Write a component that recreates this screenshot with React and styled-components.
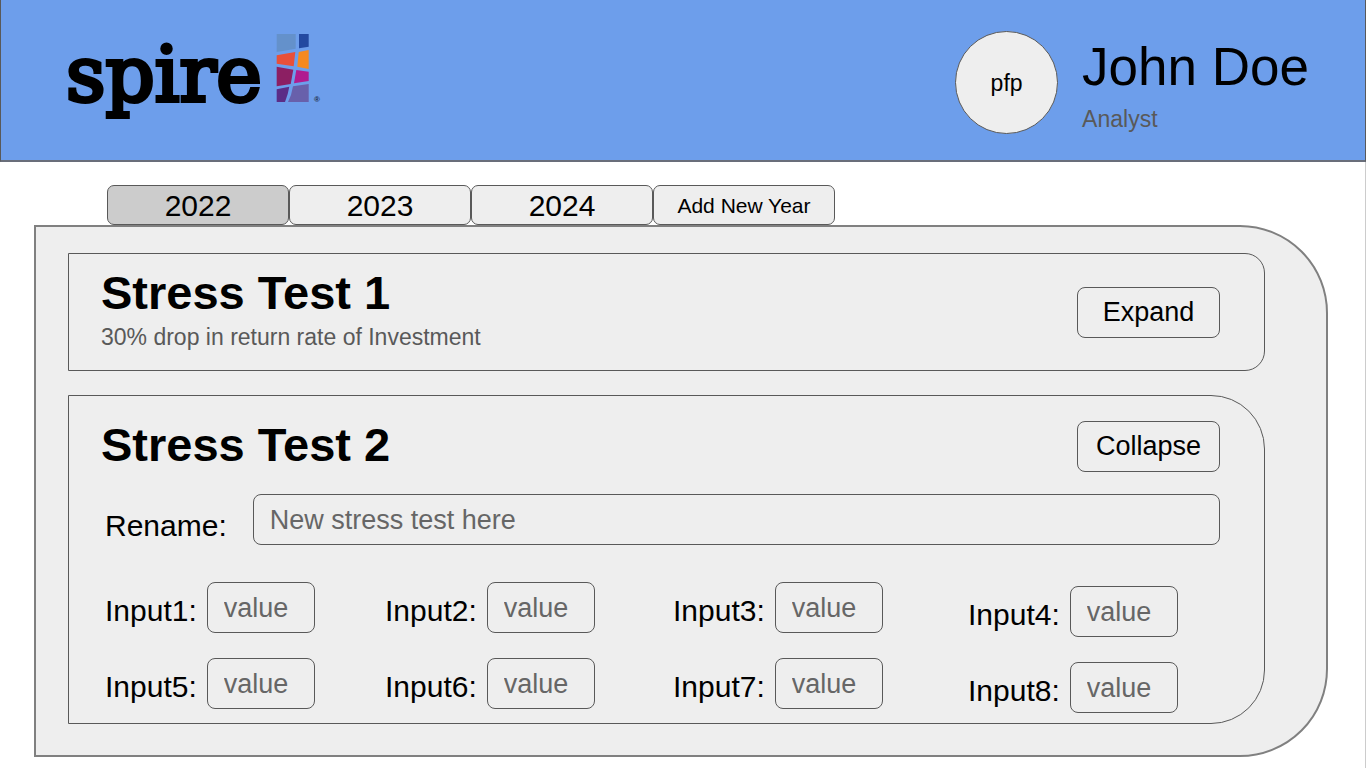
import React from "react";
import styled, { createGlobalStyle } from "styled-components";

const line = "#595959";
const surface = "#eeeeee";

const GlobalStyle = createGlobalStyle`
  *, *::before, *::after { box-sizing: border-box; }
  body {
    margin: 0;
    background: #ffffff;
    color: #000000;
    font-family: "Liberation Sans", Arial, sans-serif;
  }
  button, input { font-family: inherit; color: inherit; }
`;

const Page = styled.div`
  min-height: 100vh;
  border-right: 1px solid #cccccc;
`;

const Header = styled.header`
  display: flex;
  justify-content: space-between;
  align-items: flex-start;
  height: 162px;
  margin-right: -1px;
  padding: 31px 56px 0 59px;
  background: #6d9eeb;
  border: 1px solid ${line};
  border-width: 0 1px 2px;
  border-bottom-color: #696e7a;
`;

const Logo = styled.svg`
  display: block;
  width: 264px;
  height: 100px;
`;

const Wordmark = styled.text`
  font-family: "DejaVu Serif", serif;
  font-size: 77px;
  stroke: #000000;
  stroke-width: 4px;
  stroke-linejoin: miter;
`;

const Registered = styled.text`
  font-size: 8px;
  font-weight: bold;
  fill: #1c2a44;
`;

const Profile = styled.div`
  display: flex;
  gap: 24px;
`;

const Avatar = styled.div`
  display: flex;
  align-items: center;
  justify-content: center;
  width: 103px;
  height: 103px;
  padding-top: 2px;
  border: 1px solid ${line};
  border-radius: 50%;
  background: ${surface};
  font-size: 23px;
`;

const ProfileText = styled.div`
  padding-top: 6px;
`;

const UserName = styled.div`
  margin-bottom: 9px;
  font-size: 53px;
  line-height: 60px;
`;

const Caption = styled.p`
  margin: 0;
  font-size: 23px;
  line-height: 26px;
  color: ${line};
`;

const Main = styled.main`
  padding: 23px 37px 11px 34px;
`;

const Tabs = styled.nav`
  display: flex;
  padding-left: 73px;
`;

const Tab = styled.button`
  width: 182px;
  height: 40px;
  padding: 2px 0 0;
  border: 1px solid ${line};
  border-radius: 7px;
  background: ${(p) => (p.$active ? "#cccccc" : surface)};
  font-size: ${(p) => (p.$small ? 21 : 30)}px;
  line-height: 34px;
`;

const Panel = styled.div`
  display: flex;
  flex-direction: column;
  gap: 24px;
  padding: 26px 61px 31px 32px;
  border: 2px solid #808080;
  border-radius: 0 88px 88px 0;
  background: ${surface};
`;

const Card = styled.section`
  padding: ${(p) => (p.$open ? "22px 44px 10px 32px" : "12px 44px 11px 32px")};
  border: 1px solid ${line};
  border-radius: ${(p) => (p.$open ? "0 54px 54px 0" : "0 20px 20px 0")};
`;

const CardHead = styled.div`
  display: flex;
  justify-content: space-between;
  align-items: ${(p) => p.$align};
`;

const Summary = styled.div`
  display: flex;
  flex-direction: column;
  gap: 4px;
  padding-bottom: 9px;
`;

const Title = styled.h2`
  margin: 0;
  font-size: 47px;
  line-height: 54px;
`;

const Action = styled.button`
  width: 143px;
  height: 51px;
  padding: 0;
  border: 1px solid ${line};
  border-radius: 8px;
  background: ${surface};
  font-size: 27px;
`;

const Field = styled.div`
  display: flex;
  align-items: flex-end;
  gap: ${(p) => (p.$wide ? 26 : 10)}px;
`;

const Label = styled.label`
  font-size: 30px;
  line-height: ${(p) => (p.$wide ? 38 : 44)}px;
`;

const TextBox = styled.input`
  flex: ${(p) => (p.$wide ? "1" : "0 0 108px")};
  min-width: 0;
  width: 108px;
  height: 51px;
  padding: 1px 16px 0;
  border: 1px solid ${line};
  border-radius: 8px;
  background: ${surface};
  font-size: 27px;
  &::placeholder { color: #666666; opacity: 1; }
`;

const Form = styled.form`
  padding: 22px 0 0 4px;
`;

const Values = styled.div`
  display: grid;
  grid-template-columns: 280fr 288fr 295fr 211px;
  margin-top: 37px;
  padding-right: 41px;
`;

const ValueColumn = styled.div`
  display: flex;
  flex-direction: column;
  gap: 25px;
  padding-top: ${(p) => (p.$lowered ? 4 : 0)}px;
`;

const mosaic = [
  ["276.7,34 295.7,34 295.7,48.7 276.7,52", "#6491cb"],
  ["299,34 308.7,34 308.7,46.7 299,48.3", "#2349a0"],
  ["276.7,55.3 295.3,52 293.7,66.3 276.7,63.7", "#e8503a"],
  ["298.7,52 308.7,50 308.7,69 297.3,66.7", "#f6891f"],
  ["276.7,66.7 293.3,69.7 290.7,84 276.7,86.3", "#8c1f63"],
  ["296.3,70 308.7,71.7 308.7,81 294,83.3", "#b01c8f"],
  ["276.7,89.3 289.3,86.7 287.7,94 285,102 276.7,102", "#5b2d87"],
  ["293,86.3 308.7,84 308.7,102 288,102 291,95", "#6860ab"],
];

const years = ["2022", "2023", "2024"];
const columns = [[1, 5], [2, 6], [3, 7], [4, 8]];

export default function App() {
  return (
    <Page>
      <GlobalStyle />
      <Header>
        <Logo viewBox="60 31 264 100" role="img" aria-label="spire">
          <Wordmark x="66" y="101">spire</Wordmark>
          {mosaic.map(([points, fill]) => (
            <polygon key={points} points={points} fill={fill} />
          ))}
          <Registered x="314" y="102">®</Registered>
        </Logo>
        <Profile>
          <Avatar>pfp</Avatar>
          <ProfileText>
            <UserName>John Doe</UserName>
            <Caption>Analyst</Caption>
          </ProfileText>
        </Profile>
      </Header>
      <Main>
        <Tabs aria-label="Years">
          {years.map((year, i) => (
            <Tab key={year} type="button" $active={i === 0}>{year}</Tab>
          ))}
          <Tab type="button" $small>Add New Year</Tab>
        </Tabs>
        <Panel>
          <Card>
            <CardHead $align="center">
              <Summary>
                <Title>Stress Test 1</Title>
                <Caption>30% drop in return rate of Investment</Caption>
              </Summary>
              <Action type="button">Expand</Action>
            </CardHead>
          </Card>
          <Card $open>
            <CardHead $align="flex-end">
              <Title>Stress Test 2</Title>
              <Action type="button">Collapse</Action>
            </CardHead>
            <Form>
              <Field $wide>
                <Label $wide htmlFor="rename">Rename:</Label>
                <TextBox $wide id="rename" placeholder="New stress test here" />
              </Field>
              <Values>
                {columns.map((numbers, i) => (
                  <ValueColumn key={i} $lowered={i === 3}>
                    {numbers.map((n) => (
                      <Field key={n}>
                        <Label htmlFor={`input${n}`}>{`Input${n}:`}</Label>
                        <TextBox id={`input${n}`} placeholder="value" />
                      </Field>
                    ))}
                  </ValueColumn>
                ))}
              </Values>
            </Form>
          </Card>
        </Panel>
      </Main>
    </Page>
  );
}
